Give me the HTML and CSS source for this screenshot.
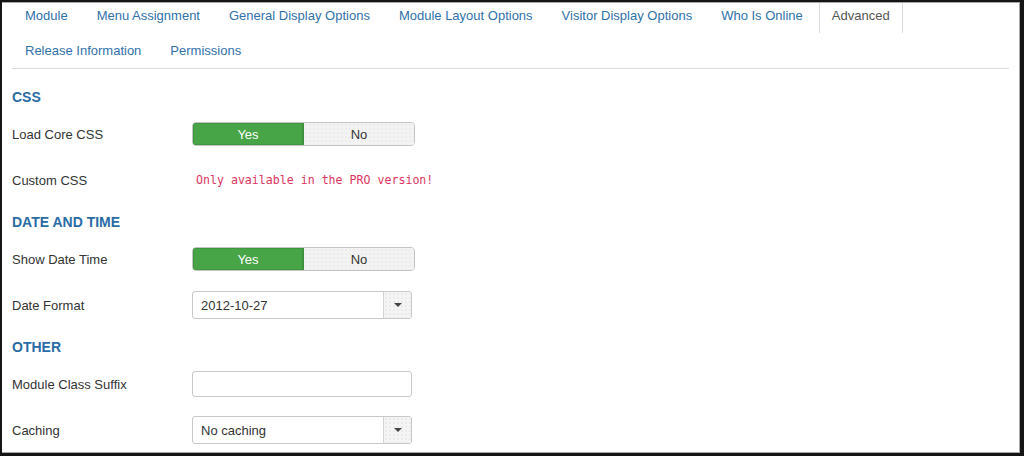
FILE: index.html
```html
<!DOCTYPE html>
<html lang="en">
<head>
<meta charset="utf-8">
<title>Module - Advanced</title>
<link rel="stylesheet" href="styles.css">
</head>
<body>
<div class="frame">
  <div class="panel">
    <ul class="tabs">
      <li><a href="#">Module</a></li>
      <li><a href="#">Menu Assignment</a></li>
      <li><a href="#">General Display Options</a></li>
      <li><a href="#">Module Layout Options</a></li>
      <li><a href="#">Visitor Display Options</a></li>
      <li><a href="#">Who Is Online</a></li>
      <li class="active"><a href="#">Advanced</a></li>
      <li><a href="#">Release Information</a></li>
      <li><a href="#">Permissions</a></li>
    </ul>
    <div class="content">
      <h3 class="section">CSS</h3>
      <div class="row">
        <label class="label">Load Core CSS</label>
        <div class="toggle"><span class="opt on">Yes</span><span class="opt">No</span></div>
      </div>
      <div class="row">
        <label class="label">Custom CSS</label>
        <span class="pro">Only available in the PRO version!</span>
      </div>

      <h3 class="section">Date and Time</h3>
      <div class="row">
        <label class="label">Show Date Time</label>
        <div class="toggle"><span class="opt on">Yes</span><span class="opt">No</span></div>
      </div>
      <div class="row">
        <label class="label">Date Format</label>
        <div class="select"><span class="value">2012-10-27</span><span class="caret"><i></i></span></div>
      </div>

      <h3 class="section">Other</h3>
      <div class="row">
        <label class="label">Module Class Suffix</label>
        <div class="input"></div>
      </div>
      <div class="row">
        <label class="label">Caching</label>
        <div class="select"><span class="value">No caching</span><span class="caret"><i></i></span></div>
      </div>
    </div>
  </div>
</div>
</body>
</html>
```
FILE: styles.css
```css
* { box-sizing: border-box; }
html, body { margin: 0; padding: 0; background: #fff; }
body {
  font-family: "Liberation Sans", Arial, Helvetica, sans-serif;
  font-size: 13px;
  color: #333;
}
.frame {
  width: 1024px;
  height: 456px;
  border-style: solid;
  border-color: #151515;
  border-width: 2px 4px 3px 2px;
  overflow: hidden;
}
.panel {
  height: 100%;
  border-style: solid;
  border-color: #a8a8a8;
  border-width: 1px 1px 1px 0;
  padding: 0 10px 0 10px;
  overflow: hidden;
  background: #fff;
}
.tabs {
  list-style: none;
  margin: -5px 0 0 0;
  padding: 0;
  display: flex;
  flex-wrap: wrap;
  border-bottom: 1px solid #dcdcdc;
}
.tabs li { margin-right: 3px; }
.tabs a {
  display: block;
  padding: 8px 12px;
  line-height: 17px;
  border: 1px solid transparent;
  border-bottom: 0;
  height: 35px;
  color: #3071a9;
  text-decoration: none;
  border-radius: 4px 4px 0 0;
}
.tabs li.active a {
  color: #555;
  border-color: #dcdcdc;
  background: #fff;
}
.content { padding-top: 18px; }
.section {
  margin: 0 0 13px 0;
  font-size: 14px;
  line-height: 20px;
  font-weight: bold;
  text-transform: uppercase;
  color: #2a6ca6;
}
.row {
  display: flex;
  align-items: center;
  height: 28px;
  margin-bottom: 18px;
}
.label {
  width: 180px;
  flex: none;
  color: #333;
}
.toggle {
  display: flex;
  width: 223px;
  height: 24px;
  border: 1px solid #c4c4c4;
  border-radius: 4px;
  overflow: hidden;
}
.opt {
  flex: 1;
  display: flex;
  align-items: center;
  justify-content: center;
  background-color: #f3f3f3;
  background-image: radial-gradient(#e2e2e2 0.6px, transparent 0.8px);
  background-size: 4px 4px;
  color: #333;
}
.opt.on {
  background: #47a447;
  color: #fff;
  border-right: 1px solid #3e8e3e;
  box-shadow: inset 0 0 0 1px #3f963f;
}
.pro {
  font-family: "DejaVu Sans Mono", "Liberation Mono", monospace;
  font-size: 11.6px;
  color: #dc3462;
  padding-left: 4px;
}
.select {
  display: flex;
  width: 220px;
  height: 28px;
  border: 1px solid #c8c8c8;
  border-radius: 3px;
  overflow: hidden;
}
.select .value {
  flex: 1;
  display: flex;
  align-items: center;
  padding-left: 8px;
  color: #333;
}
.select .caret {
  width: 28px;
  flex: none;
  display: flex;
  align-items: center;
  justify-content: center;
  border-left: 1px solid #d4d4d4;
  background-color: #f4f4f4;
  background-image: radial-gradient(#e0e0e0 0.6px, transparent 0.8px);
  background-size: 4px 4px;
}
.select .caret i {
  width: 0;
  height: 0;
  border-left: 4px solid transparent;
  border-right: 4px solid transparent;
  border-top: 4px solid #444;
}
.input {
  width: 220px;
  height: 26px;
  border: 1px solid #c8c8c8;
  border-radius: 3px;
  background: #fff;
}
```
